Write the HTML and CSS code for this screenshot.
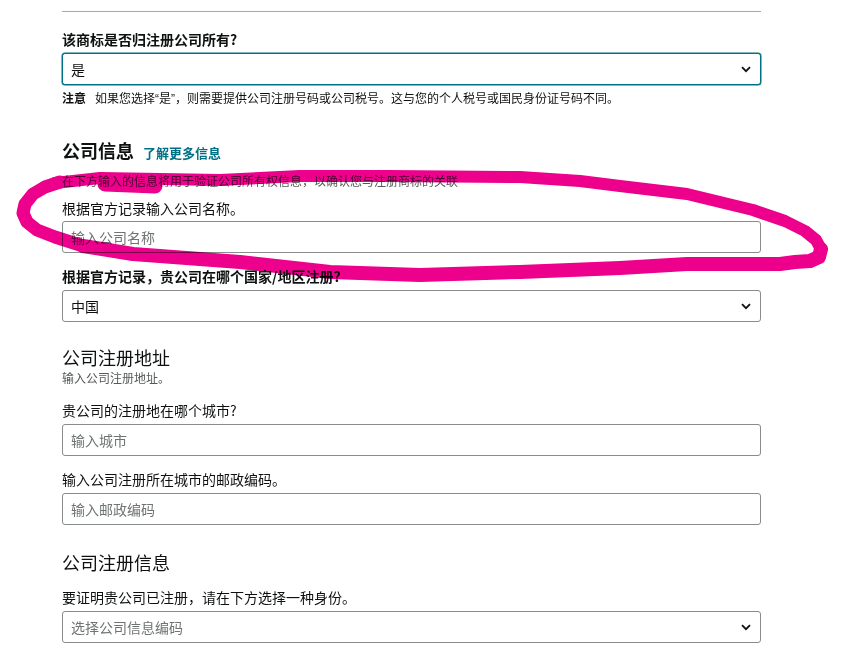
FILE: index.html
```html
<!DOCTYPE html>
<html lang="zh-CN">
<head>
<meta charset="utf-8">
<title>公司信息</title>
<link rel="stylesheet" href="styles.css">
</head>
<body>
<div class="page">
  <div class="rule"></div>

  <div class="field first">
    <div class="label bold">该商标是否归注册公司所有?</div>
    <div class="select focus"><span class="value">是</span><svg class="chev" width="10" height="7" viewBox="0 0 10 7"><path d="M1 1.2 L5 5.2 L9 1.2" fill="none" stroke="#0f1111" stroke-width="1.8"/></svg></div>
    <div class="note"><b>注意</b><span class="note-text">如果您选择<span class="q">“</span>是<span class="q">”</span>，则需要提供公司注册号码或公司税号。这与您的个人税号或国民身份证号码不同。</span></div>
  </div>

  <div class="heading-row">
    <h2 class="h-bold">公司信息</h2>
    <a class="link">了解更多信息</a>
  </div>
  <div class="desc d1">在下方输入的信息将用于验证公司所有权信息，以确认您与注册商标的关联</div>

  <div class="field f2">
    <div class="label">根据官方记录输入公司名称。</div>
    <div class="input"><span class="ph">输入公司名称</span></div>
  </div>

  <div class="field f3">
    <div class="label bold">根据官方记录，贵公司在哪个国家/地区注册?</div>
    <div class="select"><span class="value">中国</span><svg class="chev" width="10" height="7" viewBox="0 0 10 7"><path d="M1 1.2 L5 5.2 L9 1.2" fill="none" stroke="#0f1111" stroke-width="1.8"/></svg></div>
  </div>

  <h3 class="h-normal h-addr">公司注册地址</h3>
  <div class="desc d2">输入公司注册地址。</div>

  <div class="field f4">
    <div class="label">贵公司的注册地在哪个城市?</div>
    <div class="input"><span class="ph">输入城市</span></div>
  </div>

  <div class="field f5">
    <div class="label">输入公司注册所在城市的邮政编码。</div>
    <div class="input"><span class="ph">输入邮政编码</span></div>
  </div>

  <h3 class="h-normal h-reg">公司注册信息</h3>

  <div class="field f6">
    <div class="label">要证明贵公司已注册，请在下方选择一种身份。</div>
    <div class="select"><span class="ph">选择公司信息编码</span><svg class="chev" width="10" height="7" viewBox="0 0 10 7"><path d="M1 1.2 L5 5.2 L9 1.2" fill="none" stroke="#0f1111" stroke-width="1.8"/></svg></div>
  </div>
</div>

<svg class="marker" width="860" height="664" viewBox="0 0 860 664">
  <g fill="none" stroke="#ec008c" stroke-linecap="round" stroke-linejoin="round">
    <polyline stroke-width="12" points="55,183 100,178 220,180 300,176 387,176 520,177 580,181 620,186 687,194 753,210 785,221 805,231 816,240 821,249"/>
    <polyline stroke-width="15" points="105,184 155,186"/>
    <polyline stroke-width="14" points="821,249 819,257 810,261 795,262 780,264 687,264 620,268 520,272 420,275 330,272 240,262 133,254 83,246"/>
    <polyline stroke-width="13" points="83,246 55,237 37,230 27,222 23,213 25,204 33,194 45,187 60,182"/>
  </g>
</svg>
</body>
</html>
```

FILE: styles.css
```css
html, body {
  margin: 0;
  padding: 0;
  background: #ffffff;
}

body {
  font-family: "Noto Sans CJK SC", "Noto Sans", "Liberation Sans", sans-serif;
  color: #0f1111;
  position: relative;
  width: 860px;
  height: 664px;
  overflow: hidden;
}

.page {
  width: 699px;
  padding-left: 62px;
}

.rule {
  margin-top: 11px;
  border-top: 1px solid #a8a8a8;
}

.field {
  display: flex;
  flex-direction: column;
}

.first { margin-top: 17px; }
.f2 { margin-top: 8px; }
.f3 { margin-top: 13px; }
.f4 { margin-top: 14px; }
.f5 { margin-top: 13px; }
.f6 { margin-top: 15px; }

.label {
  font-size: 14px;
  line-height: 20px;
  height: 20px;
  margin-bottom: 3px;
  white-space: nowrap;
}

.first .label { margin-bottom: 4px; }
.f3 .label, .f4 .label, .f5 .label, .f6 .label { margin-bottom: 4px; }

.bold { font-weight: 700; }

.select, .input {
  box-sizing: border-box;
  height: 32px;
  border: 1px solid #888c8c;
  border-radius: 3px;
  display: flex;
  align-items: center;
  justify-content: space-between;
  padding: 0 9px 0 8px;
  font-size: 14px;
  background: #fff;
}

.select.focus {
  border-color: #007185;
  box-shadow: 0 0 0 0.5px #007185;
}

.value { color: #0f1111; }
.ph { color: #6f7373; }

.chev { display: block; margin-top: 1px; }

.note {
  margin-top: 4px;
  font-size: 12px;
  line-height: 18px;
  height: 18px;
  white-space: nowrap;
}

.note b { font-weight: 700; margin-right: 9px; }

.q { font-family: "Liberation Sans", sans-serif; }

.heading-row {
  display: flex;
  align-items: baseline;
  margin-top: 31px;
  height: 24px;
}

.h-bold {
  margin: 0;
  font-size: 18px;
  line-height: 24px;
  font-weight: 700;
}

.link {
  margin-left: 9px;
  font-size: 13px;
  font-weight: 700;
  color: #007185;
  line-height: 24px;
}

.desc {
  font-size: 12px;
  line-height: 18px;
  color: #565959;
  white-space: nowrap;
}

.d1 { margin-top: 10px; }

.h-normal {
  margin: 0;
  font-size: 18px;
  line-height: 20px;
  font-weight: 400;
}

.h-addr { margin-top: 25px; }
.d2 { margin-top: 3px; line-height: 16px; }
.h-reg { margin-top: 27px; }

.marker {
  position: absolute;
  left: 0;
  top: 0;
  pointer-events: none;
  mix-blend-mode: multiply;
}
```
